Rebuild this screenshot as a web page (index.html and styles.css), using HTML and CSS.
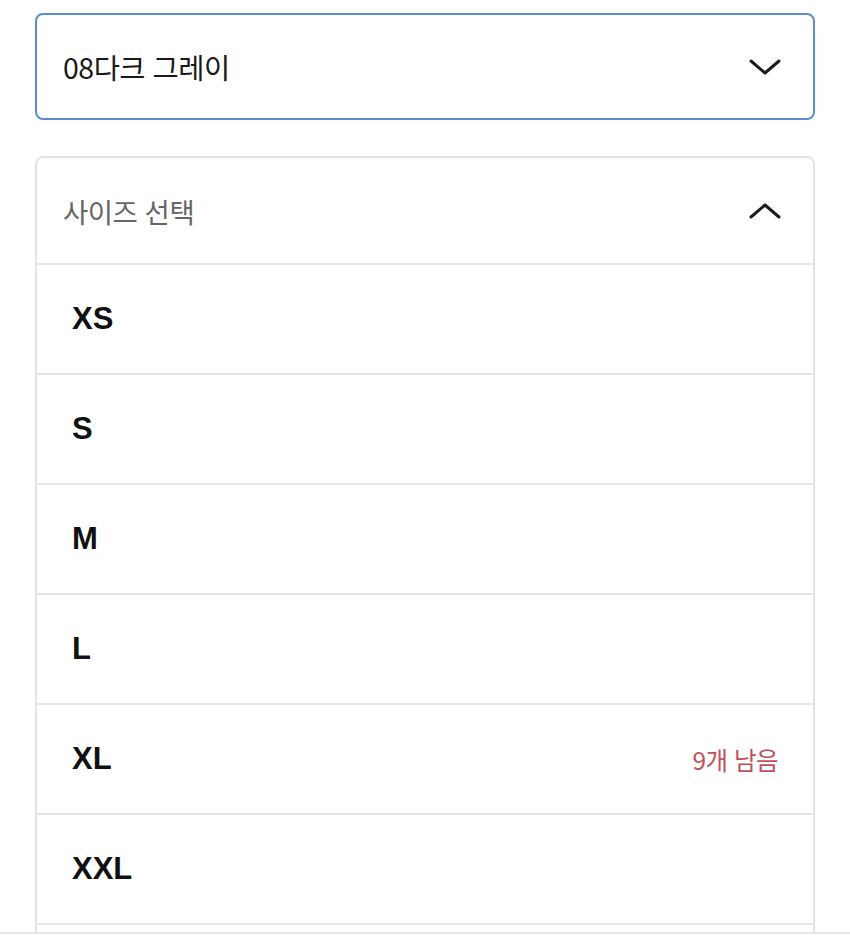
FILE: index.html
```html
<!DOCTYPE html>
<html lang="ko">
<head>
    <meta charset="UTF-8">
    <meta name="viewport" content="width=device-width, initial-scale=1.0">
    <title>옵션 선택</title>
    <link rel="stylesheet" href="styles.css">
</head>
<body>
<div class="options">
    <!-- Color select (closed) -->
    <div class="select select-active">
        <span class="select-value">08다크 그레이</span>
        <svg class="chevron" width="34" height="20" viewBox="0 0 34 20">
            <path d="M3 4 L17 16 L31 4" fill="none" stroke="#1c1c1c" stroke-width="3" stroke-linecap="round" stroke-linejoin="round"/>
        </svg>
    </div>

    <!-- Size select (open) -->
    <div class="dropdown">
        <div class="dropdown-head">
            <span class="placeholder">사이즈 선택</span>
            <svg class="chevron" width="34" height="20" viewBox="0 0 34 20">
                <path d="M3 16 L17 4 L31 16" fill="none" stroke="#1c1c1c" stroke-width="3" stroke-linecap="round" stroke-linejoin="round"/>
            </svg>
        </div>
        <ul class="size-list">
            <li>XS</li>
            <li>S</li>
            <li>M</li>
            <li>L</li>
            <li>XL <span class="stock">9개 남음</span></li>
            <li>XXL</li>
            <li></li>
        </ul>
    </div>
</div>
<div class="bottom-bar"></div>
</body>
</html>
```

FILE: styles.css
```css
html {
    overflow: hidden;
}

body {
    margin: 0;
    font-family: "Liberation Sans", Arial, "Noto Sans CJK KR", sans-serif;
    background-color: #fff;
    color: #1a1a1a;
    height: 940px;
    overflow: hidden;
}

.options {
    padding: 13px 35px 0;
}

.select {
    height: 103px;
    border: 2px solid #d9d9d9;
    border-radius: 8px;
    display: flex;
    align-items: center;
    justify-content: space-between;
    padding: 0 31px 0 26px;
}

.select-active {
    border-color: #5d8ccd;
}

.select-value {
    font-family: "Noto Sans CJK KR", sans-serif;
    font-size: 28.5px;
    color: #1a1a1a;
    letter-spacing: -0.5px;
}

.chevron {
    display: block;
}

.dropdown {
    margin-top: 36px;
    border: 2px solid #e3e3e3;
    border-bottom: none;
    border-radius: 8px 8px 0 0;
}

.dropdown-head {
    height: 105px;
    display: flex;
    align-items: center;
    justify-content: space-between;
    padding: 0 31px 0 26px;
    border-bottom: 2px solid #e6e6e6;
}

.placeholder {
    font-family: "Noto Sans CJK KR", sans-serif;
    font-size: 27.5px;
    color: #666;
    letter-spacing: -0.5px;
}

.size-list {
    list-style: none;
    margin: 0;
    padding: 0;
}

.size-list li {
    height: 108px;
    display: flex;
    align-items: center;
    justify-content: space-between;
    padding: 0 35px;
    border-bottom: 2px solid #e6e6e6;
    font-size: 31px;
    font-weight: bold;
    color: #111;
}

.stock {
    font-family: "Noto Sans CJK KR", sans-serif;
    font-size: 24.5px;
    font-weight: normal;
    color: #c0505a;
    letter-spacing: -0.5px;
}

.bottom-bar {
    position: fixed;
    left: 0;
    right: 0;
    bottom: 0;
    height: 6px;
    background-color: #fff;
    border-top: 2px solid #e6e6e6;
}
```
